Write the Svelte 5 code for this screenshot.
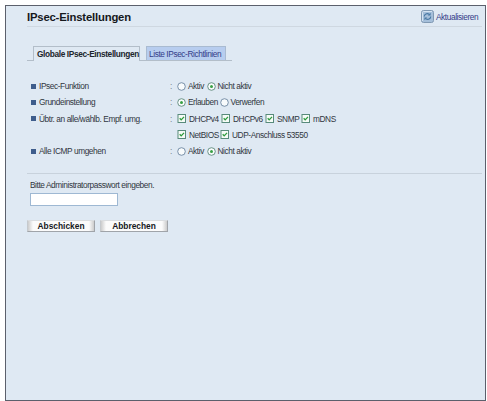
<script lang="ts">
    type Choice = { label: string, checked: boolean, width: number }
    type Setting = { name: string, type: "radio" | "checkbox", lines: Choice[][] }

    const settings: Setting[] = [
        { name: "IPsec-Funktion", type: "radio", lines: [[
            { label: "Aktiv", checked: false, width: 29.5 },
            { label: "Nicht aktiv", checked: true, width: 50 },
        ]] },
        { name: "Grundeinstellung", type: "radio", lines: [[
            { label: "Erlauben", checked: true, width: 42.5 },
            { label: "Verwerfen", checked: false, width: 50 },
        ]] },
        { name: "Übtr. an alle/wählb. Empf. umg.", type: "checkbox", lines: [
            [
                { label: "DHCPv4", checked: true, width: 44 },
                { label: "DHCPv6", checked: true, width: 44 },
                { label: "SNMP", checked: true, width: 36 },
                { label: "mDNS", checked: true, width: 36 },
            ],
            [
                { label: "NetBIOS", checked: true, width: 43 },
                { label: "UDP-Anschluss 53550", checked: true, width: 95 },
            ],
        ] },
        { name: "Alle ICMP umgehen", type: "radio", lines: [[
            { label: "Aktiv", checked: false, width: 29.5 },
            { label: "Nicht aktiv", checked: true, width: 50 },
        ]] },
    ]

    let password = $state("")
</script>

<main>
    <header>
        <h1>IPsec-Einstellungen</h1>
        <a class="refresh" href="#refresh">
            <svg width="13" height="13" viewBox="0 0 13 13">
                <rect x=".5" y=".5" width="12" height="12" rx="2" fill="#a5bfda" stroke="#8099b3" />
                <path d="M1.5 11V2.5a1 1 0 0 1 1-1H11" fill="none" stroke="#d5e4f2" />
                <path d="M3.3 6.6C3.3 4 6 2.9 8.2 4.3M9.7 6.4C9.7 9 7 10.1 4.8 8.7" fill="none" stroke="#4777a3" stroke-width="1.2" />
                <path d="M9.6 2.8v2.8H6.8zM3.4 10.2V7.4h2.8z" fill="#4777a3" />
            </svg>
            <span>Aktualisieren</span>
        </a>
    </header>

    <nav>
        <a class="tab active" href="#global"><span>Globale IPsec-Einstellungen</span></a>
        <a class="tab" href="#policies"><span>Liste IPsec-Richtlinien</span></a>
    </nav>

    <section>
        {#each settings as setting}
        <div class="setting">
            <div class="name">{setting.name}</div>
            <div class="colon">:</div>
            <div>
                {#each setting.lines as line}
                <div class="line">
                    {#each line as choice}
                    <label class={setting.type} style:width="{choice.width}px">
                        {#if setting.type === "radio"}
                        <svg width="9" height="9" viewBox="0 0 9 9">
                            <circle cx="4.5" cy="4.5" r="3.8" fill="#f8fbfc" stroke={choice.checked ? "#5d8a7c" : "#6c86a0"} stroke-width=".9" />
                            {#if choice.checked}<circle cx="4.5" cy="4.5" r="1.5" fill="#39a045" />{/if}
                        </svg>
                        {:else}
                        <svg width="9" height="9" viewBox="0 0 9 9">
                            <rect x="1" y=".5" width="7.5" height="8" fill="#f6fbf7" stroke="#588b7b" />
                            {#if choice.checked}<path d="M2.7 4.2l1.5 1.7 2.8-3" fill="none" stroke="#2c9b3c" stroke-width="1.3" />{/if}
                        </svg>
                        {/if}
                        <span>{choice.label}</span>
                    </label>
                    {/each}
                </div>
                {/each}
            </div>
        </div>
        {/each}
    </section>

    <form>
        <label class="prompt" for="password">Bitte Administratorpasswort eingeben.</label>
        <input id="password" type="password" bind:value={password}>
        <div class="buttons">
            <button type="button">Abschicken</button>
            <button type="button">Abbrechen</button>
        </div>
    </form>
</main>

<style>
    :global(body) {
        background: #fff;
    }

    main {
        box-sizing: border-box;
        width: 481px;
        height: 396px;
        margin: 5px 0 0 5px;
        border: 1px solid #5b606c;
        background: #dfe9f3;
        color: #303640;
        font: 8.3px/16px "Liberation Sans", Arial, sans-serif;
        letter-spacing: -0.41px;
        white-space: nowrap;
    }

    a {
        color: #343c88;
        text-decoration: none;
    }

    header {
        display: flex;
        justify-content: space-between;
        box-sizing: border-box;
        height: 21px;
        margin-left: 21px;
        margin-right: 3px;
        border-bottom: 1px solid #cfd8e1;
    }

    h1 {
        margin: 2px 0 0;
        color: #15181c;
        font-size: 11.3px;
        letter-spacing: -0.18px;
        line-height: 18px;
    }

    .refresh {
        display: flex;
        gap: 2px;
        width: 61px;
        margin-top: 4px;
        line-height: 14px;
    }

    .refresh svg {
        flex: none;
    }

    nav {
        display: flex;
        width: 205px;
        height: 15px;
        margin: 19px 0 0 21px;
        padding-left: 6px;
        box-sizing: border-box;
        box-shadow: inset 0 -1px #b3bec9;
    }

    .tab {
        box-sizing: border-box;
        width: 80px;
        height: 14px;
        margin-left: 6px;
        padding-left: 2px;
        border: 1px solid #a9bbd1;
        border-bottom: 0;
        background: #b7cdef;
        line-height: 14px;
    }

    .tab.active {
        width: 107px;
        height: 15px;
        margin: 0;
        padding-left: 3px;
        border-color: #b3bec9;
        background: #dfe9f3;
        color: #20252c;
        font-weight: bold;
        letter-spacing: -0.36px;
    }

    section {
        height: 95px;
        margin: 17px 3px 0 21px;
        border-bottom: 1px solid #c8d2dc;
    }

    .setting {
        display: grid;
        grid-template-columns: 143px 7px auto;
    }

    .name::before {
        content: "";
        display: inline-block;
        width: 5px;
        height: 5px;
        margin: 0 3px 0 4px;
        background: #3e5d8c;
        vertical-align: 0.5px;
    }

    .colon {
        color: #78818c;
    }

    .line {
        display: flex;
        height: 16.3px;
    }

    .line label {
        display: flex;
        align-items: center;
        gap: 2px;
        height: 16px;
    }

    .line .checkbox {
        gap: 3px;
    }

    .line svg {
        flex: none;
    }

    form {
        margin: 3px 0 0 21px;
    }

    .prompt {
        display: block;
        margin-left: 3px;
    }

    input {
        display: block;
        box-sizing: border-box;
        width: 88px;
        height: 13px;
        margin: 0 0 0 3px;
        border: 1px solid #9eb8d3;
        background: #fff;
    }

    .buttons {
        display: flex;
        gap: 5px;
        margin-top: 14px;
    }

    button {
        box-sizing: border-box;
        width: 68px;
        height: 12px;
        padding: 0;
        border: 1px solid;
        border-color: #dadde0 #a0a4a9 #a0a4a9 #c5c9cd;
        background: linear-gradient(90deg, #ccc 0, #fbfbfb 5px, #fbfbfb 61px, #ccc 100%);
        color: #16191d;
        font: bold 8.4px/10px "Liberation Sans", Arial, sans-serif;
        letter-spacing: 0;
    }
</style>
